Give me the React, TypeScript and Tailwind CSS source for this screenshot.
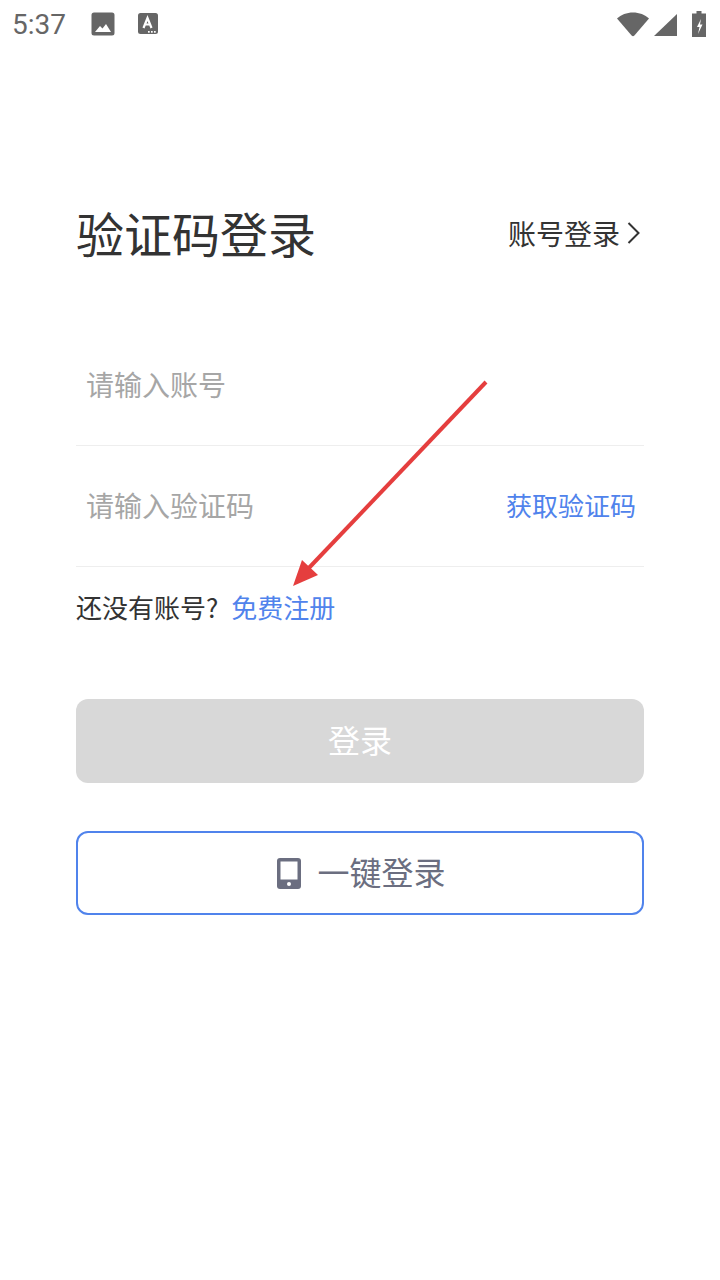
import React from 'react';

const cjk = 'font-["Noto_Sans_CJK_SC","Noto_Sans",sans-serif]';

function StatusBar() {
  return (
    <div className="flex h-12 items-center justify-between pl-[12px] pr-[14px] text-[#666666]">
      <div className="flex items-center">
        <span className='pt-[2px] font-["Roboto",sans-serif] text-[28px] leading-none text-[#666666]'>5:37</span>
        <svg className="ml-[25px]" width="24" height="24" viewBox="0 0 24 24" fill="#666666">
          <path d="M3 0.500h18a2.500 2.500 0 0 1 2.500 2.500v18a2.500 2.500 0 0 1-2.500 2.500H3A2.500 2.500 0 0 1 .5 21V3A2.500 2.500 0 0 1 3 .5z" />
          <path fill="#fff" d="M4 20l5-6 2.500 2.500L15 12l5 8z" />
        </svg>
        <svg className="ml-[23px]" width="20" height="24" viewBox="0 0 20 24" fill="#666666">
          <rect x="0" y="1" width="20" height="21" rx="2.500" />
          <path fill="none" stroke="#fff" strokeWidth="2.200" d="M5.500 16l4-10 4 10M7 12.500h5" />
          <rect x="10" y="19" width="1.700" height="1.700" fill="#fff" />
          <rect x="13" y="19" width="1.700" height="1.700" fill="#fff" />
          <rect x="16" y="19" width="1.700" height="1.700" fill="#fff" />
        </svg>
      </div>
      <div className="flex items-center">
        <svg width="32" height="25" viewBox="0 0 32 25" fill="#666666">
          <path d="M0 6.500C4 2.800 9.800 0.500 16 0.500s12 2.300 16 6L17.400 23.600a1.900 1.900 0 0 1-2.800 0z" />
        </svg>
        <svg className="ml-[5px]" width="23" height="24" viewBox="0 0 23 24" fill="#666666">
          <path d="M23 2v22H0z" />
        </svg>
        <svg className="ml-[15px]" width="14" height="26" viewBox="0 0 14 26" fill="#666666">
          <path d="M4.500 0h5v2.500H14V26H0V2.500h4.500z" />
          <path fill="#fff" d="M9 8L5 16h2.500l-1.500 7 4.500-9.500H8z" />
        </svg>
      </div>
    </div>
  );
}

export default function App() {
  return (
    <div className={`relative h-[1280px] w-[720px] overflow-hidden bg-white ${cjk}`}>
      <StatusBar />

      <div className="px-[76px] pt-[148px]">
        <div className="flex h-[72px] items-center justify-between">
          <h1 className="text-[48px] font-normal leading-none text-[#333333]">验证码登录</h1>
          <div className="flex items-center pr-[4px] pt-[2px] text-[#333333]">
            <span className="text-[28px] leading-none">账号登录</span>
            <svg className="ml-[7px]" width="13" height="24" viewBox="0 0 13 24" fill="none" stroke="#333333" strokeWidth="2">
              <path d="M1.500 2l10 10-10 10" />
            </svg>
          </div>
        </div>

        <div className="mt-[57px] flex h-[121px] items-center border-b border-[#eeeeee] px-[10px] pb-[2px]">
          <span className="text-[28px] leading-none text-[#a6a6a6]">请输入账号</span>
        </div>
        <div className="flex h-[121px] items-center justify-between border-b border-[#eeeeee] pb-[2px] pl-[10px] pr-[8px]">
          <span className="text-[28px] leading-none text-[#a6a6a6]">请输入验证码</span>
          <span className="text-[26px] leading-none text-[#5083ec]">获取验证码</span>
        </div>

        <div className="mt-[25px] flex h-[30px] items-center text-[26px] leading-none">
          <span className="text-[#333333]">还没有账号?</span>
          <span className="ml-[13px] text-[#5083ec]">免费注册</span>
        </div>

        <button className="mt-[77px] flex h-[84px] w-full items-center justify-center rounded-[12px] bg-[#d8d8d8] pb-[4px] text-[32px] text-white">
          登录
        </button>

        <button className="mt-[48px] flex h-[84px] w-full items-center justify-center rounded-[12px] border-2 border-[#5083ec] bg-white pl-[3px] text-[32px] text-[#6b6e80]">
          <svg className="mr-[16px]" width="24" height="31" viewBox="0 0 24 31">
            <rect width="24" height="31" rx="3" fill="#6b6e80" />
            <rect x="3.500" y="3.500" width="17" height="18" fill="#fff" />
            <circle cx="12" cy="26" r="2" fill="#fff" />
          </svg>
          <span className="pb-[4px]">一键登录</span>
        </button>
      </div>

      {/* red annotation arrow drawn over the form */}
      <svg className="absolute left-0 top-0" width="720" height="1280" viewBox="0 0 720 1280" fill="none">
        <path d="M486 382L306 571" stroke="#e53e3e" strokeWidth="4" />
        <path d="M293 586L302 560L318 575z" fill="#e53e3e" />
      </svg>
    </div>
  );
}
